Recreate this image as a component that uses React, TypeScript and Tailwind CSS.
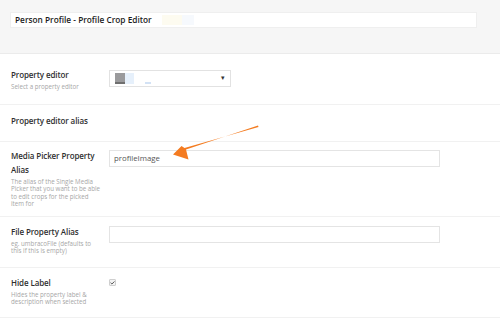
import { Check } from 'lucide-react';

interface RowProps {
  label: React.ReactNode;
  desc?: string[];
  className: string;
  children?: React.ReactNode;
}

function Row({ label, desc, className, children }: RowProps) {
  return (
    <div className={`flex border-b border-[#f1f1f1] pl-[11px] ${className}`}>
      <div className="w-[98px] shrink-0">
        <div className="text-[8px] font-semibold leading-[14px] tracking-[-0.1px] text-[#2f2f2f]">{label}</div>
        {desc && (
          <div className="mt-[1px] flex flex-col whitespace-nowrap text-[6.2px] text-[#a6a6a6]">
            {desc.map((line) => (
              <span key={line} className="block h-[7.4px] leading-[7.4px]">
                {line}
              </span>
            ))}
          </div>
        )}
      </div>
      <div className="min-w-0 flex-1">{children}</div>
    </div>
  );
}

export default function App() {
  return (
    <div className="relative h-[320px] w-[500px] overflow-hidden bg-white font-['Open_Sans',sans-serif]">
      {/* header */}
      <div className="h-[54px] border-b border-[#ebebeb] bg-[#f6f6f6] pl-[10px] pt-[12px]">
        <div className="flex h-[16px] w-[467px] items-center border border-[#efefef] bg-white pl-[4px]">
          <span className="text-[8.3px] font-semibold text-[#1b1b1b]">Person Profile - Profile Crop Editor</span>
          <span className="ml-[10px] h-[10px] w-[20px] bg-[#fdfbf0]" />
          <span className="h-[10px] w-[12px] bg-[#f6f9fd]" />
        </div>
      </div>

      <div>
        <Row label="Property editor" desc={['Select a property editor']} className="h-[51px] pt-[14px]">
          <div className="relative mt-[2px] flex h-[17px] w-[122px] items-center border border-[#e2e2e2] bg-white pl-[5px]">
            <span className="h-[11px] w-[10px] border-b-2 border-[#6f6f6f] bg-[#9a9a9c]" />
            <span className="h-[11px] w-[9px] bg-[#e6f0fb]" />
            <span className="ml-[11px] mt-[8px] h-[2px] w-[6px] bg-[#d3e2f5]" />
            <span className="absolute right-[5px] top-[2px] text-[7px] text-[#333]">▾</span>
          </div>
        </Row>

        <Row label="Property editor alias" className="h-[37px] pt-[9px]" />

        <Row
          label={
            <>
              Media Picker Property
              <br />
              Alias
            </>
          }
          desc={[
            'The alias of the Single Media',
            'Picker that you want to be able',
            'to edit crops for the picked',
            'item for',
          ]}
          className="h-[75px] pt-[7px]"
        >
          <div className="mt-[1px] flex h-[17px] w-[331px] items-center border border-[#e4e4e4] bg-white pl-[4px] text-[7.8px] text-[#565656]">
            profileImage
          </div>
        </Row>

        <Row
          label="File Property Alias"
          desc={['eg. umbracoFile (defaults to', 'this if this is empty)']}
          className="h-[51px] pt-[8px]"
        >
          <div className="mt-[1px] h-[17px] w-[331px] border border-[#e4e4e4] bg-white" />
        </Row>

        <Row
          label="Hide Label"
          desc={['Hides the property label &', 'description when selected']}
          className="h-[50px] pt-[8px]"
        >
          <div className="mt-[3px] flex h-[7px] w-[7px] items-center justify-center rounded-[1px] border border-[#cfcfcf] bg-[#f3f3f3]">
            <Check className="h-[6px] w-[6px] text-[#333]" strokeWidth={4} />
          </div>
        </Row>
      </div>

      {/* callout arrow */}
      <svg className="absolute left-0 top-0" width="500" height="320" viewBox="0 0 500 320">
        <path
          d="M258 125.5 L186 149.5 L188.5 159.5 L173 154.5 L181.5 146 L184.5 148 L258.5 127 Z"
          fill="#f47b20"
        />
      </svg>
    </div>
  );
}
